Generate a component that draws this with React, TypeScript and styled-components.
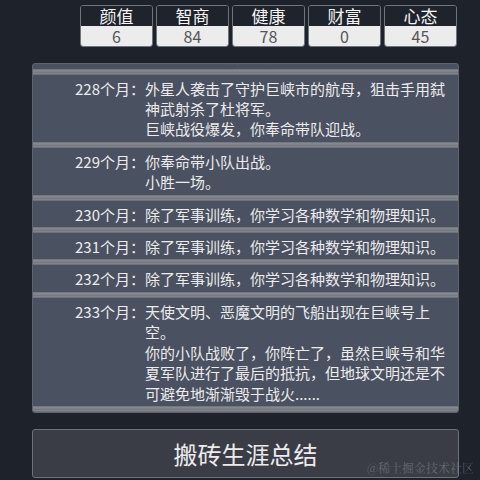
import React, { useEffect, useRef } from 'react'
import styled, { createGlobalStyle } from 'styled-components'

// ----- Data -----

interface Attr {
  name: string
  value: number
}

interface LogEntry {
  month: number
  lines: string[]
}

const attrs: Attr[] = [
  { name: '颜值', value: 6 },
  { name: '智商', value: 84 },
  { name: '健康', value: 78 },
  { name: '财富', value: 0 },
  { name: '心态', value: 45 },
]

const logs: LogEntry[] = [
  { month: 225, lines: ['除了军事训练，你学习各种数学和物理知识。'] },
  { month: 226, lines: ['除了军事训练，你学习各种数学和物理知识。'] },
  { month: 227, lines: ['你奉命带小队出战。', '小队立了大功，大捷。'] },
  {
    month: 228,
    lines: [
      '外星人袭击了守护巨峡市的航母，狙击手用弑神武射杀了杜将军。',
      '巨峡战役爆发，你奉命带队迎战。',
    ],
  },
  { month: 229, lines: ['你奉命带小队出战。', '小胜一场。'] },
  { month: 230, lines: ['除了军事训练，你学习各种数学和物理知识。'] },
  { month: 231, lines: ['除了军事训练，你学习各种数学和物理知识。'] },
  { month: 232, lines: ['除了军事训练，你学习各种数学和物理知识。'] },
  {
    month: 233,
    lines: [
      '天使文明、恶魔文明的飞船出现在巨峡号上空。',
      '你的小队战败了，你阵亡了，虽然巨峡号和华夏军队进行了最后的抵抗，但地球文明还是不可避免地渐渐毁于战火......',
    ],
  },
]

// ----- Styles -----

const GlobalStyle = createGlobalStyle`
  html, body {
    margin: 0;
    padding: 0;
    background: #1e222a;
  }
  body {
    font-family: "Noto Sans CJK SC", "Noto Sans", sans-serif;
    color: #ececec;
  }
`

const Page = styled.div`
  position: relative;
  width: 480px;
  height: 480px;
  overflow: hidden;
  padding: 5px 21px 0 32px;
  box-sizing: border-box;
  display: flex;
  flex-direction: column;
`

const AttrBar = styled.div`
  display: flex;
  justify-content: flex-end;
  gap: 3px;
  padding-right: 2px;
`

const AttrBox = styled.div`
  box-sizing: border-box;
  width: 73px;
  border: 1px solid #6f737b;
  border-radius: 3px;
  overflow: hidden;
  display: flex;
  flex-direction: column;
  text-align: center;
`

const AttrName = styled.div`
  height: 20px;
  line-height: 20px;
  font-size: 17px;
  color: #f4f4f4;
  background: #1f232b;
`

const AttrValue = styled.div`
  height: 20px;
  line-height: 20px;
  font-size: 16px;
  color: #555;
  background: #ececec;
`

const LogPanel = styled.div`
  margin-top: 16px;
  height: 350px;
  box-sizing: border-box;
  border: 1px solid #5e646e;
  border-radius: 3px;
  background: #4a5160;
  overflow: hidden;
`

const Entry = styled.div`
  display: grid;
  grid-template-columns: 112px 1fr;
  padding: 4px 8px 2px 0;
  font-size: 15px;
  line-height: 20.4px;
  color: #ececec;
`

const Month = styled.div`
  text-align: right;
  white-space: nowrap;
`

const Text = styled.div`
  display: flex;
  flex-direction: column;
`

const Divider = styled.div`
  height: 6px;
  background: linear-gradient(
    to bottom,
    #6b7078 0%,
    #8a8d92 30%,
    #73777e 55%,
    #84878c 80%,
    #5f636b 100%
  );
`

const SummaryButton = styled.button`
  margin-top: 16px;
  height: 49px;
  border: 1px solid #6d7179;
  border-radius: 3px;
  background: #3a3d46;
  color: #ececec;
  font-family: "Noto Sans CJK SC", sans-serif;
  font-size: 24px;
  cursor: pointer;
`

const Watermark = styled.div`
  position: absolute;
  right: 6px;
  bottom: 4px;
  font-family: "Noto Serif CJK SC", "Noto Sans CJK SC", serif;
  font-size: 12px;
  color: rgba(200, 200, 205, 0.32);
  pointer-events: none;
`

// ----- Component Logic -----

const App: React.FC = () => {
  const panelRef = useRef<HTMLDivElement>(null)

  // keep the newest month in view
  useEffect(() => {
    const el = panelRef.current
    if (el) el.scrollTop = el.scrollHeight
  }, [])

  return (
    <>
      <GlobalStyle />
      <Page>
        <AttrBar>
          {attrs.map(a => (
            <AttrBox key={a.name}>
              <AttrName>{a.name}</AttrName>
              <AttrValue>{a.value}</AttrValue>
            </AttrBox>
          ))}
        </AttrBar>
        <LogPanel ref={panelRef}>
          {logs.map(log => (
            <div key={log.month}>
              <Entry>
                <Month>{log.month}个月：</Month>
                <Text>
                  {log.lines.map((line, i) => (
                    <span key={i}>{line}</span>
                  ))}
                </Text>
              </Entry>
              <Divider />
            </div>
          ))}
        </LogPanel>
        <SummaryButton>搬砖生涯总结</SummaryButton>
        <Watermark>@稀土掘金技术社区</Watermark>
      </Page>
    </>
  )
}

export default App
